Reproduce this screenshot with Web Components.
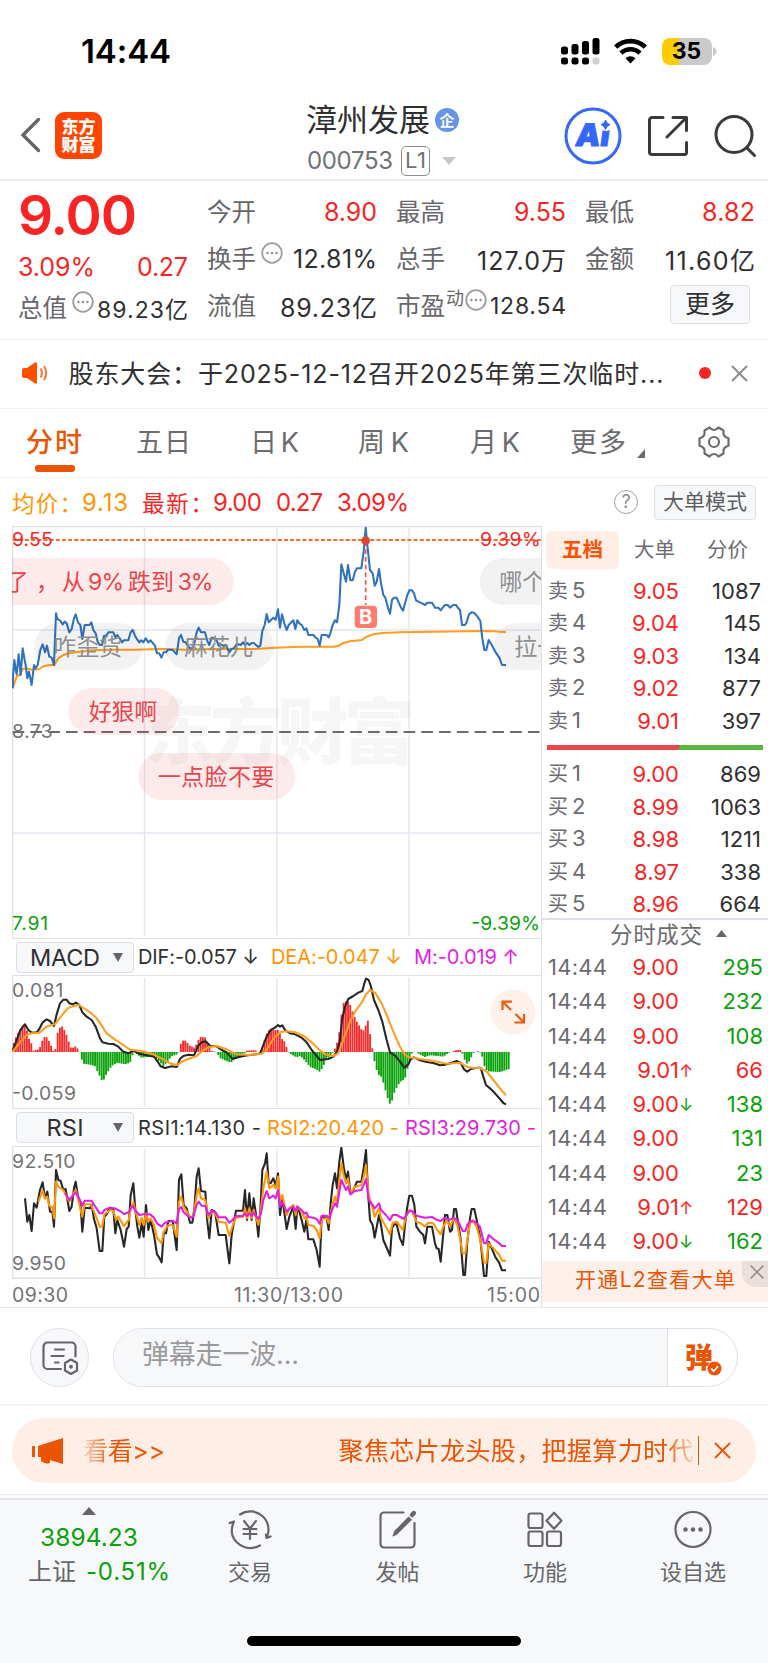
<!DOCTYPE html>
<html lang="zh-CN">
<head>
<meta charset="utf-8">
<title>漳州发展 000753</title>
<style>
  html, body { margin: 0; padding: 0; }
  body { width: 768px; height: 1663px; overflow: hidden; background: #fff; color: #2f2f31; font-family: Inter, "Noto Sans CJK SC", sans-serif; }
</style>
</head>
<body>
<stock-page></stock-page>
<script>
// Shared base: every element renders its own markup and styles in an open root
class Base extends HTMLElement {
  connectedCallback() {
    if (this.shadowRoot) return;
    const tmpl = document.createElement('template');
    tmpl.innerHTML = `<style>
      :host { display: block; box-sizing: border-box; }
      * { box-sizing: border-box; }
      svg { display: block; flex: none; }
    </style>` + this.render();
    this.attachShadow({ mode: 'open' }).append(tmpl.content.cloneNode(true));
  }
}

class StatusBar extends Base {
  render() {
    return /*html*/`
    <style>
      :host { display: flex; height: 94px; padding: 8px 51.5px 0 81px; align-items: center; justify-content: space-between; color: #000; }
      .time { font-size: 33px; font-weight: 600; }
      .right { display: flex; align-items: center; }
      .battery { display: flex; align-items: center; margin-left: 14.5px; }
      .cell { width: 50px; height: 27px; border-radius: 8px; font: 700 23px/27px Inter, sans-serif; text-align: center; background: linear-gradient(90deg, #ffcc01 17px, #cacaca 17px); }
    </style>
    <span class="time"><fit-text w="90">14:44</fit-text></span>
    <div class="right">
      <svg width="39" height="28" viewBox="0 0 39 28">
        <rect x="0" y="9.5" width="7" height="8" rx="2.5"/><rect x="10.5" y="7" width="7" height="10.5" rx="2.5"/>
        <rect x="21" y="4" width="7" height="13.5" rx="2.5"/><rect x="31.5" y="1" width="7" height="16.5" rx="2.5"/>
        <rect x="0" y="20.5" width="7" height="7" rx="2.5"/><rect x="10.5" y="20.5" width="7" height="7" rx="2.5"/>
        <rect x="21" y="20.5" width="7" height="7" rx="2.5"/><rect x="31.5" y="20.5" width="7" height="7" rx="2.5" fill="#cfcfcf"/>
      </svg>
      <svg width="33" height="26" viewBox="0 0 33 26" fill="none" stroke="#000" stroke-width="4.6" style="margin-left:14px">
        <path d="M1.7 9.2a21 21 0 0 1 29.6 0"/><path d="M7 15.2a13.5 13.5 0 0 1 19 0"/>
        <path d="M11.4 20.3a7.4 7.4 0 0 1 10.2 0L16.5 25.5z" fill="#000" stroke="none"/>
      </svg>
      <div class="battery"><div class="cell">35</div>
        <svg width="4" height="9" viewBox="0 0 4 9" style="margin-left:1px"><path d="M0 0q3.5 1.5 3.5 4.5T0 9z" fill="#cacaca"/></svg></div>
    </div>`;
  }
}

class StockHeader extends Base {
  render() {
    return /*html*/`
    <style>
      :host { display: grid; grid-template-columns: 306px 1fr 204px; height: 87px; border-bottom: 2px solid #ececee; }
      .left { display: flex; align-items: center; padding: 0 0 2px 20px; gap: 14px; height: 84px; }
      .logo { width: 47px; height: 47px; border-radius: 9px; background: #ff4400; color: #fff; font: 900 17px/18px "Noto Sans CJK SC", sans-serif; text-align: center; padding-top: 5px; }
      .mid { padding-top: 8px; }
      .name { display: flex; align-items: center; font-size: 31px; line-height: 36px; gap: 5px; }
      .badge { width: 24px; height: 24px; border-radius: 50%; background: #6594ea; color: #fff; font: 700 15px/23px "Noto Sans CJK SC", sans-serif; text-align: center; }
      .code { display: flex; align-items: center; font-size: 24px; line-height: 30px; color: #727276; margin: 8px 0 0 1px; }
      .lv { width: 29px; height: 30px; border: 1.5px solid #8d8d90; border-radius: 5px; font-size: 22px; line-height: 27px; padding-left: 3px; margin-left: 8px; }
      .right { display: flex; align-items: center; height: 84px; }
    </style>
    <div class="left">
      <svg width="21" height="36" viewBox="0 0 21 36" fill="none" stroke="#66666a" stroke-width="3.4" stroke-linecap="round"><path d="M18.5 2.5L3 18l15.5 15.5"/></svg>
      <div class="logo"><div>东方</div><div>财富</div></div>
    </div>
    <div class="mid">
      <div class="name"><fit-text w="124">漳州发展</fit-text><span class="badge">企</span></div>
      <div class="code"><fit-text w="86">000753</fit-text><span class="lv"><fit-text w="21">L1</fit-text></span>
        <svg width="14" height="8" viewBox="0 0 14 8" style="margin-left:12px"><path d="M0 0h14L7 8z" fill="#c9c9cb"/></svg></div>
    </div>
    <div class="right">
      <svg width="58" height="58" viewBox="0 0 58 58"><circle cx="29" cy="29" r="27" fill="none" stroke="#3667fb" stroke-width="3"/>
        <text x="10.5" y="39.5" font-family="Inter, sans-serif" font-size="31" font-weight="900" fill="#3667fb" stroke="#3667fb" stroke-width="1" stroke-linejoin="round" transform="translate(5.500) skewX(-8)" textLength="34">Ai</text>
        <circle cx="42" cy="17" r="7" fill="#fff"/>
        <path d="M41.500 13q1 3.800 4.500 4.700-3.500 1-4.500 4.800-1-3.800-4.500-4.800 3.500-.9 4.500-4.700z" fill="#3667fb" stroke="#3667fb" stroke-width="1"/></svg>
      <svg width="42" height="42" viewBox="0 0 42 42" fill="none" stroke="#3a3a3c" stroke-width="3" stroke-linecap="round" stroke-linejoin="round" style="margin-left:25px"><path d="M16 2.5H5A2.500 2.500 0 0 0 2.500 5v32A2.500 2.500 0 0 0 5 39.500h32.500a2 2 0 0 0 2-2V27.500M26 2.500h13.500v13M39.500 2.500L20 22"/></svg>
      <svg width="44" height="44" viewBox="0 0 44 44" fill="none" stroke="#3a3a3c" stroke-width="3" stroke-linecap="round" style="margin-left:25px"><circle cx="20" cy="20.5" r="18"/><path d="M33 34l7.500 7.500"/></svg>
    </div>`;
  }
}

class InfoDot extends Base {
  render() {
    return /*html*/`<svg width="22" height="22" viewBox="0 0 22 22"><circle cx="11" cy="11" r="9.8" fill="none" stroke="#9c9c9f" stroke-width="1.8"/>
      <g fill="#8b8b8e"><circle cx="6.5" cy="11" r="1.2"/><circle cx="11" cy="11" r="1.2"/><circle cx="15.5" cy="11" r="1.2"/></g></svg>`;
  }
}

class QuoteSummary extends Base {
  render() {
    return /*html*/`
    <style>
      :host { display: grid; grid-template-columns: repeat(4, 170px); column-gap: 19px; height: 159px; padding: 7px 0 0 18px; border-bottom: 1.5px solid #f0f0f2; font-size: 25px; }
      .row { display: flex; align-items: center; height: 47px; white-space: nowrap; }
      .row > :last-child { margin-left: auto; }
      .row > :first-child { color: #67676b; font-size: 24.5px; margin-top: -2px; }
      .price { height: 54px; font-size: 55px; line-height: 54px; font-weight: 600; color: #f82424; }
      .chg { display: flex; justify-content: space-between; height: 42px; line-height: 50px; color: #f82424; }
      .red { color: #f82424; }
      .small { font-size: 23px; padding-top: 1px; }
      info-dot { margin: -12px 0 0 5px; }
      .sup { font-size: 18px; color: #67676b; margin: -18px 0 0 1px; }
      .more { width: 80px; height: 39px; border: 1.5px solid #dfe0e5; border-radius: 4px; background: #f7f8fa; text-align: center; font-size: 25px; line-height: 36px; margin: -2px 5px 0 0; }
    </style>
    <div>
      <div class="price"><fit-text w="119">9.00</fit-text></div>
      <div class="chg"><fit-text w="77">3.09%</fit-text><fit-text w="51">0.27</fit-text></div>
      <div class="row"><span>总值</span><info-dot></info-dot><span class="small"><fit-text w="91">89.23亿</fit-text></span></div>
    </div>
    <div>
      <div class="row"><span>今开</span><span class="red"><fit-text w="53">8.90</fit-text></span></div>
      <div class="row"><span>换手</span><info-dot></info-dot><span><fit-text w="84">12.81%</fit-text></span></div>
      <div class="row"><span>流值</span><span><fit-text w="97">89.23亿</fit-text></span></div>
    </div>
    <div>
      <div class="row"><span>最高</span><span class="red"><fit-text w="52">9.55</fit-text></span></div>
      <div class="row"><span>总手</span><span><fit-text w="89">127.0万</fit-text></span></div>
      <div class="row"><span>市盈</span><span class="sup">动</span><info-dot style="margin-left:1px"></info-dot><span class="small"><fit-text w="76">128.54</fit-text></span></div>
    </div>
    <div>
      <div class="row"><span>最低</span><span class="red"><fit-text w="53">8.82</fit-text></span></div>
      <div class="row"><span>金额</span><span><fit-text w="90">11.60亿</fit-text></span></div>
      <div class="row"><i></i><span class="more">更多</span></div>
    </div>`;
  }
}

class NoticeBar extends Base {
  render() {
    return /*html*/`
    <style>
      :host { display: flex; align-items: center; height: 69px; padding: 0 20px 2px 22px; border-bottom: 1.5px solid #f0f0f2; font-size: 25px; }
      .txt { margin: -2px 0 0 20.5px; flex: 1; }
      .dot { width: 12px; height: 12px; border-radius: 50%; background: #f82424; }
    </style>
    <svg width="26" height="22" viewBox="0 0 26 22"><path d="M0 8a2 2 0 0 1 2-2h3l8-5.500q2-1 2 1v19q0 2-2 1L5 16H2a2 2 0 0 1-2-2z" fill="#ff5000"/><path d="M18.500 6.500q2.800 4.500 0 9M22 4q4.500 7 0 14" fill="none" stroke="#ff7434" stroke-width="2"/></svg>
    <span class="txt"><fit-text w="595">股东大会：于2025-12-12召开2025年第三次临时...</fit-text></span>
    <i class="dot"></i>
    <svg width="17" height="17" viewBox="0 0 17 17" stroke="#8d8d90" stroke-width="2" style="margin-left:20px"><path d="M1 1l15 15M16 1L1 16"/></svg>`;
  }
}

class PeriodTabs extends Base {
  render() {
    return /*html*/`
    <style>
      :host { display: flex; height: 69px; padding-left: 26px; border-bottom: 1.5px solid #f0f0f2; font-size: 27px; line-height: 67px; color: #6c6c70; }
      .on { color: #ea5404; font-weight: 500; display: flex; flex-direction: column; align-items: center; }
      .on i { width: 40px; height: 7px; border-radius: 3px; background: #ea5404; margin: -11px 0 0 2px; }
      svg { align-self: center; }
    </style>
    <span class="on"><fit-text w="56">分时</fit-text><i></i></span>
    <fit-text w="55" style="margin-left:54px">五日</fit-text>
    <fit-text w="49" style="margin-left:59px">日K</fit-text>
    <fit-text w="51" style="margin-left:59px">周K</fit-text>
    <fit-text w="50" style="margin-left:61px">月K</fit-text>
    <fit-text w="56" style="margin-left:50px">更多</fit-text>
    <svg width="8" height="9" viewBox="0 0 8 9" style="margin:20px 0 0 11px"><path d="M8 0v9H0z" fill="#6c6c70"/></svg>
    <svg width="32" height="32" viewBox="0 0 32 32" fill="none" stroke="#6c6c70" stroke-width="2.2" stroke-linejoin="round" style="margin:-2px 0 0 53px"><path d="M11.500 1.500q2 2.500 4.500 2.500t4.500-2.500l5 3q-.5 3.500.6 5.200t4.400 2.600v7.400q-3.300.9-4.400 2.600t-.6 5.200l-5 3q-2-2.500-4.500-2.500t-4.500 2.500l-5-3q.5-3.500-.6-5.200T1.500 19.700v-7.400q3.300-.9 4.400-2.600t.6-5.200z"/><circle cx="16" cy="16" r="5"/></svg>`;
  }
}

class ChartInfo extends Base {
  render() {
    return /*html*/`
    <style>
      :host { display: flex; align-items: center; height: 48px; padding: 0 12px 0 12px; font-size: 24px; color: #f82424; white-space: nowrap; }
      .avg { color: #ff9500; }
      .q { width: 24px; height: 24px; border: 1.6px solid #a0a0a3; border-radius: 50%; margin-left: auto; color: #8d8d90; font-size: 18px; line-height: 21px; text-align: center; }
      .mode { width: 102px; height: 35px; margin-left: 16px; border: 1.5px solid #dfe0e5; border-radius: 4px; background: #f7f8fa; color: #5c5c60; font-size: 21px; line-height: 32px; text-align: center; }
    </style>
    <fit-text class="avg" w="70" style="font-size:22.5px">均价：</fit-text><fit-text class="avg" w="46">9.13</fit-text>
    <fit-text w="71" style="font-size:22.5px;margin-left:14px">最新：</fit-text><fit-text w="49">9.00</fit-text>
    <fit-text w="47" style="margin-left:14px">0.27</fit-text><fit-text w="72" style="margin-left:14px">3.09%</fit-text>
    <span class="q">?</span><span class="mode">大单模式</span>`;
  }
}

// Chart drawings share one scale: three units to a pixel, plot starts at x = 36
const PRICE = '38,520 40,470 43,435 47,465 50,478 56,418 62,480 68,400 74,435 77,450 82,490 87,470 95,510 102,450 107,460 113,450 121,405 128,388 135,412 141,392 148,425 155,428 162,450 168,295 172,312 180,316 188,328 194,320 200,325 208,352 215,342 222,310 227,298 234,322 241,330 247,372 254,330 268,330 274,322 280,345 287,355 293,380 299,390 306,390 312,362 319,362 325,352 340,352 346,366 352,360 359,370 366,382 372,376 385,376 392,352 398,345 405,362 412,374 418,382 424,376 430,382 437,370 445,382 452,376 458,384 465,392 471,415 478,415 484,428 491,412 498,412 504,404 517,404 530,418 537,370 543,360 550,380 557,382 564,394 570,400 577,400 583,385 590,352 596,338 603,352 615,352 622,378 628,390 635,368 642,370 650,376 656,392 662,388 670,392 677,390 682,400 688,412 695,402 702,400 708,390 715,388 722,390 729,382 735,390 742,384 748,390 755,384 761,384 768,390 775,396 781,392 787,348 794,330 800,297 806,322 812,316 820,308 827,314 834,283 840,338 846,298 853,325 860,345 866,330 880,316 886,342 892,316 898,325 905,330 913,345 919,340 925,360 940,360 947,368 953,372 959,392 965,360 980,360 986,367 992,352 998,330 1005,316 1011,322 1018,270 1024,148 1031,175 1038,200 1044,150 1051,196 1058,196 1065,170 1071,160 1084,160 1091,110 1097,38 1102,90 1110,165 1118,175 1124,212 1130,200 1137,162 1143,205 1150,240 1156,248 1163,275 1170,296 1176,255 1182,248 1190,248 1196,262 1203,278 1209,287 1216,262 1222,240 1228,226 1236,226 1242,235 1248,256 1260,262 1268,266 1275,270 1282,263 1296,263 1305,278 1315,278 1322,286 1328,278 1335,270 1343,270 1350,278 1360,270 1368,270 1375,280 1380,285 1386,330 1395,330 1400,322 1407,298 1415,292 1423,294 1432,304 1441,318 1447,370 1453,405 1459,405 1466,375 1474,388 1487,412 1498,428 1506,450 1518,450';
const AVG = '38,520 50,485 60,478 68,462 80,460 95,464 118,462 130,454 145,451 163,449 175,430 190,420 210,414 240,410 280,406 330,404 400,404 480,402 560,404 640,402 700,402 760,402 825,398 900,395 1000,395 1015,393 1030,384 1050,379 1086,375 1100,365 1120,358 1150,354 1200,352 1300,350 1400,349 1470,348 1500,350 1518,352';
const DIF = '38,378 50,345 60,318 68,305 75,298 85,315 95,323 110,322 118,312 128,292 140,283 150,288 162,303 170,268 180,235 190,224 200,224 208,235 218,238 228,233 238,240 247,262 260,275 275,285 287,305 300,340 308,352 325,356 340,357 355,365 370,380 385,385 400,377 415,385 435,390 450,393 462,395 472,408 482,424 495,429 515,424 530,426 540,402 550,393 565,389 582,391 595,362 605,352 617,349 630,362 650,364 665,375 680,382 697,401 715,397 730,393 750,390 780,386 790,360 800,335 812,315 825,308 834,300 840,305 847,301 855,315 870,325 885,328 905,338 920,352 935,375 950,393 960,405 985,402 1000,395 1012,378 1020,345 1026,285 1035,245 1045,222 1060,213 1075,203 1087,198 1093,175 1098,161 1106,165 1113,185 1122,225 1135,255 1147,290 1160,345 1170,382 1185,392 1200,410 1213,428 1225,418 1232,403 1242,397 1260,406 1280,411 1300,414 1320,421 1335,419 1355,413 1370,408 1382,413 1392,433 1402,440 1413,432 1430,428 1442,428 1450,455 1458,480 1470,490 1485,505 1500,522 1510,534 1518,538';
const DEA = '38,380 60,352 80,330 95,325 118,323 140,305 165,297 185,272 203,250 220,243 237,240 255,252 270,262 290,280 305,302 320,325 345,344 370,360 390,374 420,377 460,388 485,400 510,415 530,420 550,408 570,400 590,393 610,375 628,366 650,363 680,373 710,388 750,390 785,386 800,375 810,358 825,335 845,320 860,319 885,322 910,332 935,352 955,372 975,388 1000,393 1015,385 1030,345 1050,290 1065,260 1085,233 1098,208 1110,195 1125,203 1145,235 1160,270 1180,320 1200,365 1215,390 1228,397 1260,402 1300,408 1340,416 1380,413 1400,425 1415,428 1440,429 1460,440 1480,465 1500,490 1518,511';
const HIST = '38,20 50,50 60,68 68,78 75,80 82,60 90,28 96,25 97,0 102,5 118,8 125,30 132,45 142,44 150,25 158,10 162,-4 166,0 168,45 178,70 184,80 192,68 200,50 208,25 214,10 228,18 236,5 242,-5 248,-35 270,-38 285,-42 298,-70 308,-90 320,-65 335,-42 350,-32 375,-37 390,-32 398,-8 405,5 412,-8 425,-17 440,-15 465,-12 480,-30 490,-42 502,-30 515,-12 535,-6 540,20 548,34 558,34 568,20 585,12 592,30 600,45 615,44 625,22 635,3 650,0 660,-18 675,-25 692,-32 705,-22 720,-14 732,-6 740,4 765,6 780,-5 788,10 795,45 805,65 820,66 835,66 845,40 855,30 863,3 868,-4 875,-8 890,-16 900,-12 915,-25 930,-45 945,-50 960,-60 970,-42 980,-20 995,-8 1002,5 1010,22 1018,60 1024,110 1032,153 1048,150 1056,125 1068,95 1080,75 1088,62 1095,70 1101,98 1106,90 1112,38 1117,10 1120,0 1125,-40 1135,-68 1145,-75 1155,-110 1165,-145 1172,-160 1185,-115 1200,-90 1215,-80 1225,-40 1235,-5 1245,3 1255,-5 1275,-15 1290,-10 1315,-12 1330,-14 1345,-3 1355,0 1365,5 1380,7 1386,0 1392,-20 1402,-37 1412,-20 1420,-3 1435,3 1445,-5 1452,-40 1462,-58 1500,-60 1515,-55 1530,-50';
const RSI1 = '75,820 82,890 88,870 95,918 102,835 110,848 120,795 128,772 135,820 142,800 150,860 157,860 162,905 168,735 175,765 182,768 190,795 197,792 208,858 215,845 222,790 227,770 234,815 241,830 247,920 254,848 270,850 275,840 282,882 290,910 299,978 307,978 313,875 320,868 330,848 340,852 346,925 352,885 362,915 372,965 380,912 386,905 392,810 400,775 406,855 412,905 418,938 425,895 431,935 438,840 445,915 452,885 462,930 471,988 478,998 485,1012 491,925 498,925 505,888 518,888 530,975 537,765 544,748 551,840 560,850 570,893 577,893 583,850 590,755 596,730 603,798 616,800 622,890 628,940 635,855 645,860 656,930 677,930 688,1015 695,930 708,857 729,857 735,795 741,885 748,805 755,885 761,820 768,870 775,935 781,855 787,735 795,715 800,685 806,775 812,775 820,760 827,780 834,745 840,870 847,820 860,912 868,875 880,845 887,912 892,845 898,860 905,885 913,920 919,885 925,943 940,943 950,975 959,1025 965,875 980,878 986,915 992,835 998,780 1005,745 1011,790 1018,710 1024,668 1031,725 1038,765 1044,740 1051,800 1058,800 1071,770 1084,770 1091,730 1098,675 1104,800 1110,885 1118,900 1124,938 1137,870 1143,900 1150,945 1163,975 1170,992 1176,910 1183,898 1190,898 1200,940 1209,960 1216,890 1222,845 1228,812 1236,812 1243,840 1249,905 1260,920 1270,930 1275,955 1282,905 1296,905 1305,955 1310,970 1316,972 1322,1010 1330,925 1335,870 1342,870 1350,920 1356,915 1362,852 1368,852 1375,900 1381,935 1390,1050 1395,1050 1402,950 1410,880 1415,852 1423,852 1430,885 1441,940 1452,1053 1459,1053 1466,950 1475,970 1487,998 1497,1012 1506,1036 1518,1036';
const RSI2 = '115,830 128,797 135,820 142,815 148,843 157,846 162,880 168,770 175,785 190,795 208,830 220,805 228,795 236,830 247,875 254,838 272,838 282,860 290,880 299,905 307,905 313,868 330,855 340,858 348,885 355,875 372,903 386,885 392,850 400,832 408,865 418,900 425,878 431,900 438,865 445,890 452,880 462,900 471,938 485,955 491,920 505,900 518,900 530,935 537,830 544,815 551,845 570,875 580,875 590,810 596,790 603,820 616,825 625,880 635,860 645,863 656,890 677,893 688,932 697,905 708,878 729,875 735,850 741,880 748,850 755,880 761,855 775,900 781,865 790,790 800,740 808,790 820,780 827,790 834,755 840,830 847,810 860,870 868,850 880,840 887,870 892,845 905,860 913,880 919,875 925,900 940,902 950,915 959,940 965,882 980,880 986,895 998,835 1005,815 1011,835 1018,765 1024,715 1031,750 1038,775 1044,760 1051,805 1065,785 1084,780 1091,755 1098,720 1106,810 1118,850 1124,875 1137,850 1143,880 1155,900 1170,928 1178,893 1190,890 1209,915 1216,880 1228,855 1236,858 1249,890 1262,895 1275,905 1285,893 1300,895 1310,912 1322,928 1330,905 1340,885 1350,905 1362,880 1372,900 1380,940 1388,985 1396,985 1402,945 1410,895 1418,885 1430,905 1441,945 1452,1012 1459,1014 1466,955 1480,970 1498,990 1506,1007 1518,1007';
const RSI3 = '195,803 208,825 222,808 228,802 238,822 247,842 254,827 274,827 285,843 299,865 307,865 313,855 325,850 345,850 360,858 372,867 386,862 398,842 405,855 418,870 431,868 450,868 462,878 471,895 485,905 495,893 505,890 518,888 530,895 537,852 544,846 551,862 570,878 580,875 590,840 596,830 605,842 616,843 625,870 635,858 645,860 656,877 677,877 688,893 697,885 708,873 729,873 735,865 741,873 748,865 755,873 761,863 775,882 783,865 790,825 800,798 808,820 820,812 827,820 834,795 840,845 847,832 860,860 870,850 880,845 887,858 892,845 905,855 913,866 919,862 925,876 940,878 950,882 959,896 965,872 980,872 988,880 998,850 1005,835 1011,845 1018,800 1024,765 1031,780 1038,795 1044,785 1051,808 1065,798 1084,795 1091,780 1098,762 1106,825 1118,840 1124,850 1137,835 1143,855 1158,870 1170,886 1178,870 1190,870 1212,882 1222,865 1228,858 1236,858 1249,872 1275,878 1296,876 1310,884 1322,888 1332,880 1350,884 1362,878 1375,890 1388,918 1396,918 1402,900 1412,888 1425,890 1440,905 1452,955 1459,955 1466,930 1480,942 1498,955 1506,963 1518,963';

const line = (pts, color, w = 6.2) => `<polyline points="${pts}" fill="none" stroke="${color}" stroke-width="${w}" stroke-linejoin="round"/>`;
const grid = (y1, y2) => [433.5, 831, 1227].map(x => `<path d="M${x} ${y1}V${y2}" stroke="#e2e6ef" stroke-width="4"/>`).join('');

// Bars between the zero line and the interpolated envelope
function bars() {
  const env = HIST.split(' ').map(p => p.split(',').map(Number));
  let out = '';
  for (let x = 41; x < 1526; x += 6.6) {
    const i = Math.max(1, env.findIndex(p => p[0] >= x));
    const [x0, h0] = env[i - 1], [x1, h1] = env[i];
    const h = h0 + (h1 - h0) * (x - x0) / (x1 - x0);
    out += `<rect x="${(x - 2.8).toFixed(1)}" y="${(h > 0 ? 381 - h : 381).toFixed(1)}" width="5.6" height="${Math.abs(h).toFixed(1)}" fill="${h > 0 ? '#f52b2b' : '#09a209'}"/>`;
  }
  return out;
}

class PriceChart extends Base {
  pill(x, y, w, text, hot, tx, tw) {
    return `<rect x="${x}" y="${y}" width="${w}" height="141" rx="70.5" fill="${hot ? '#ea3943' : '#000'}" fill-opacity="${hot ? .1 : .05}"/>
      <text x="${tx}" y="${y + 97}" font-size="69" fill="${hot ? '#e94449' : '#8e8e90'}" ${tw ? `textLength="${tw}"` : ''}>${text}</text>`;
  }
  render() {
    return /*html*/`
    <style>
      :host { height: 412px; }
      text { font-family: Inter, "Noto Sans CJK SC", sans-serif; }
    </style>
    <svg width="530" height="412" viewBox="36 33 1590 1236">
      <path d="M38 1269V35H1626" fill="none" stroke="#dfe1e7" stroke-width="4"/>
      ${grid(40, 1262)}
      <path d="M38 345H1624M38 954H1624" stroke="#e2e6ef" stroke-width="4"/>
      <text x="430" y="728" font-size="216" font-weight="900" fill="#000" fill-opacity=".035" textLength="816">东方财富</text>
      <path d="M38 651H1624" stroke="#6b6b6b" stroke-width="6" stroke-dasharray="35 18.3"/>
      ${line(AVG, '#ff9d1e')}${line(PRICE, '#2f73c0')}
      <path d="M38 75H1624" stroke="#f76b2c" stroke-width="6" stroke-dasharray="12 6.5"/>
      <path d="M1097 80V270" stroke="#f5544c" stroke-width="5" stroke-dasharray="14 9"/>
      <circle cx="1097" cy="77" r="13" fill="#e2452f"/>
      <rect x="1064" y="272" width="67" height="67" rx="12" fill="#ff7b6e"/>
      <text x="1097" y="327" font-size="60" font-weight="700" fill="#fff" text-anchor="middle">B</text>
      ${this.pill(-60, 129, 761, '<tspan x="17">了</tspan><tspan x="108">，</tspan><tspan x="185">从</tspan><tspan x="264" textLength="108">9%</tspan><tspan x="384">跌到</tspan><tspan x="533" textLength="107">3%</tspan>', true, 17)}
      ${this.pill(103, 324, 325, '咋歪货', false, 160, 206)}
      ${this.pill(495, 324, 327, '麻花儿', false, 553, 206)}
      ${this.pill(205, 519, 332, '好狠啊', true, 266, 206)}
      ${this.pill(415, 714, 470, '一点脸不要', true, 473, 350)}
      ${this.pill(1439, 129, 320, '哪个', false, 1498, 138)}
      ${this.pill(1482, 324, 320, '拉一', false, 1543, 138)}
      <g font-size="58">
        <text x="36" y="93" fill="#f82424" textLength="122">9.55</text>
        <text x="1440" y="93" fill="#f82424" textLength="182">9.39%</text>
        <text x="36" y="670" fill="#737376" textLength="122">8.73</text>
        <text x="36" y="1245" fill="#09a209" textLength="108">7.91</text>
        <text x="1414" y="1245" fill="#09a209" textLength="206">-9.39%</text>
      </g>
    </svg>`;
  }
}

class IndicatorBar extends Base {
  render() {
    return /*html*/`
    <style>
      :host { display: flex; align-items: center; height: 38px; border: solid #dfe1e7; border-width: 1.5px 0; padding-left: 4px; font-size: 20px; white-space: nowrap; }
      .pick { width: 118px; height: 31px; border: 1.5px solid #dcdee4; border-radius: 4px; background: #f7f8fa; display: flex; align-items: center; font-size: 23.5px; margin-right: 4px; }
      .pick b { flex: 1; font-weight: 400; display: flex; justify-content: center; }
      .pick svg { margin-right: 10px; }
    </style>
    <div class="pick"><b><slot name="name"></slot></b><svg width="10" height="9" viewBox="0 0 10 9"><path d="M0 0h10L5 9z" fill="#66666a"/></svg></div>
    <slot></slot>`;
  }
}

class MacdChart extends Base {
  render() {
    return /*html*/`
    <style>
      :host { height: 132px; position: relative; }
      text { font-family: Inter, sans-serif; }
      .zoom { position: absolute; right: 6px; top: 13px; }
    </style>
    <svg width="530" height="132" viewBox="36 153 1590 396">
      <path d="M38 153V549" stroke="#dfe1e7" stroke-width="4"/>${grid(159, 543)}
      ${bars()}${line(DIF, '#262626')}${line(DEA, '#ff9d1e')}
      <text x="36" y="216" font-size="58" fill="#737376" textLength="154">0.081</text>
      <text x="36" y="525" font-size="58" fill="#737376" textLength="192">-0.059</text>
    </svg>
    <svg class="zoom" width="46" height="46" viewBox="0 0 46 46"><circle cx="23" cy="23" r="22.5" fill="#fdf1ea"/>
      <path d="M12.500 21V12.700H22M13 13l8 8M34 25v8.500h-9.500M33.500 33l-8-8" fill="none" stroke="#ea5a10" stroke-width="2.2"/></svg>`;
  }
}

class RsiChart extends Base {
  render() {
    return /*html*/`
    <style>
      :host { height: 132px; }
      text { font-family: Inter, sans-serif; }
    </style>
    <svg width="530" height="132" viewBox="36 666 1590 396">
      <path d="M38 666V1062" stroke="#dfe1e7" stroke-width="4"/>${grid(672, 1056)}
      <path d="M36 1060H1626" stroke="#dfe1e7" stroke-width="5"/>
      ${line(RSI1, '#262626')}${line(RSI2, '#ff9500')}${line(RSI3, '#e31ee3')}
      <text x="36" y="729" font-size="58" fill="#737376" textLength="190">92.510</text>
      <text x="36" y="1036" font-size="58" fill="#737376" textLength="162">9.950</text>
    </svg>`;
  }
}

class OrderBook extends Base {
  render() {
    const sell = [['卖5', '9.05', 1087], ['卖4', '9.04', 145], ['卖3', '9.03', 134], ['卖2', '9.02', 877], ['卖1', '9.01', 397]];
    const buy = [['买1', '9.00', 869], ['买2', '8.99', 1063], ['买3', '8.98', 1211], ['买4', '8.97', 338], ['买5', '8.96', 664]];
    const deals = [['9.00', '', 295], ['9.00', '', 232], ['9.00', '', 108], ['9.01', '↑', 66], ['9.00', '↓', 138], ['9.00', '', 131], ['9.00', '', 23], ['9.01', '↑', 129], ['9.00', '↓', 162]];
    const row = r => `<div class="row"><span class="lab">${r[0][0]}<i>${r[0][1]}</i></span><span class="p">${r[1]}</span><span class="v">${r[2]}</span></div>`;
    const deal = r => {
      const c = r[1] === '↑' ? 'r' : 'g';
      return `<div class="row deal"><span class="t"><fit-text w="59">14:44</fit-text></span><span class="p">${r[0]}</span><span class="a ${c}">${r[1]}</span><span class="v ${c}">${r[2]}</span></div>`;
    };
    return /*html*/`
    <style>
      :host { width: 227px; margin-left: -1px; border-left: 1.5px solid #dfe1e7; font-size: 22px; flex: none; background: #fff; }
      .tabs { display: flex; height: 48px; padding: 5px 0 0 4px; color: #6c6c70; font-size: 20.5px; line-height: 38px; }
      .tabs b { width: 73px; height: 38px; border-radius: 6px; background: #ffeee5; color: #ff5000; text-align: center; }
      .tabs span { margin-left: 15px; }
      .tabs span + span { margin-left: 32px; }
      .row { display: flex; height: 32.4px; line-height: 34px; padding: 0 7px 0 6px; }
      .lab { width: 60px; color: #6c6c70; font-size: 20px; line-height: 33px; }
      .lab i { font-style: normal; font-size: 22px; margin-left: 4px; }
      .p { width: 71px; color: #f82424; text-align: right; }
      .v { flex: 1; text-align: right; }
      .bar { height: 5px; margin: 9.5px 5px 7px; background: linear-gradient(120deg, #e9474b 61%, #56b840 61%); }
      .head { display: flex; align-items: center; height: 32px; margin-top: -1.5px; border-top: 2px solid #dfe1e7; padding: 0 0 3px 68px; color: #6c6c70; font-size: 22.5px; }
      .deal { height: 34.3px; line-height: 35px; padding-right: 5px; }
      .t { width: 60px; color: #6c6c70; }
      .a { width: 16px; font-size: 17px; line-height: 36px; }
      .r { color: #f82424; } .g { color: #09a209; }
      .vip { position: relative; height: 41px; margin-top: 2px; background: #fdf0ea; color: #ea5404; font-size: 21px; line-height: 37px; padding-left: 33px; overflow: hidden; }
      .x { position: absolute; right: 0; top: 0; width: 26px; height: 26px; border-radius: 0 0 0 14px; background: #eadfda; padding: 4px 0 0 8px; }
    </style>
    <div class="tabs"><b>五档</b><span>大单</span><span>分价</span></div>
    ${sell.map(row).join('')}
    <div class="bar"></div>
    ${buy.map(row).join('')}
    <div class="head"><fit-text w="92">分时成交</fit-text><svg width="11" height="7" viewBox="0 0 11 7" style="margin-left:14px"><path d="M0 7L5.500 0 11 7z" fill="#66666a"/></svg></div>
    ${deals.map(deal).join('')}
    <div class="vip"><fit-text w="160">开通L2查看大单</fit-text><span class="x"><svg width="14" height="14" viewBox="0 0 14 14" stroke="#8d8d90" stroke-width="1.5"><path d="M.5.5l13 13M13.500.5l-13 13"/></svg></span></div>`;
  }
}

class MarketPanel extends Base {
  render() {
    return /*html*/`
    <style>
      :host { display: flex; height: 782px; border-bottom: 1.5px solid #e6e7eb; overflow: hidden; padding-left: 12px; }
      .charts { width: 530px; flex: none; }
      .o { color: #ff9500; } .m { color: #e31ee3; }
      .axis { display: flex; font-size: 19.5px; line-height: 33px; color: #737376; }
    </style>
    <div class="charts">
      <price-chart></price-chart>
      <indicator-bar><fit-text slot="name" w="70">MACD</fit-text>
        <fit-text w="121">DIF:-0.057 ↓</fit-text><fit-text class="o" w="131" style="margin-left:12px">DEA:-0.047 ↓</fit-text><fit-text class="m" w="105" style="margin-left:12px">M:-0.019 ↑</fit-text></indicator-bar>
      <macd-chart></macd-chart>
      <indicator-bar style="height:39px"><fit-text slot="name" w="37">RSI</fit-text>
        <fit-text w="123">RSI1:14.130 -</fit-text><fit-text class="o" w="132" style="margin-left:6px">RSI2:20.420 -</fit-text><fit-text class="m" w="131" style="margin-left:6px">RSI3:29.730 -</fit-text></indicator-bar>
      <rsi-chart></rsi-chart>
      <div class="axis"><fit-text w="56">09:30</fit-text><fit-text w="109" style="margin-left:166px">11:30/13:00</fit-text><fit-text w="53" style="margin-left:144px">15:00</fit-text></div>
    </div>
    <order-book></order-book>`;
  }
}

class DanmakuInput extends Base {
  render() {
    return /*html*/`
    <style>
      :host { display: flex; height: 98px; padding: 20px 30px 0; gap: 24px; border-bottom: 2px solid #f5f5f7; }
      .set { width: 59px; height: 59px; border: 1.5px solid #dfe0e5; border-radius: 50%; background: #f7f8fa; padding: 12px 0 0 11px; }
      .box { display: flex; width: 625px; height: 59px; border: 1.5px solid #dfe0e5; border-radius: 30px; overflow: hidden; }
      .in { flex: 1; background: #f7f8fa; border-right: 1.5px solid #dfe0e5; padding-left: 28px; font-size: 27px; line-height: 52px; color: #9a9a9d; }
      .send { width: 69px; display: grid; place-items: center start; padding: 0 0 4px 17px; color: #ea5404; position: relative; font: 900 28px/30px "Noto Sans CJK SC", sans-serif; }
      .send svg { position: absolute; left: 39px; top: 32px; }
    </style>
    <div class="set"><svg width="37" height="35" viewBox="0 0 37 35" fill="none" stroke="#66666a" stroke-width="2.2" stroke-linecap="round" stroke-linejoin="round"><path d="M19 28H5.500a4 4 0 0 1-4-4V5.500a4 4 0 0 1 4-4h24a4 4 0 0 1 4 4v10M13 8.500h9M9.500 15h12M13 21.500h3.500"/><path d="M29 18.500l6 3.500v7.500L29 33l-6-3.500V22z"/><circle cx="29" cy="25.7" r="1.2" fill="#66666a" stroke-width="1.5"/></svg></div>
    <div class="box"><div class="in"><fit-text w="157">弹幕走一波...</fit-text></div>
      <div class="send">弹<svg width="15" height="15" viewBox="0 0 15 15"><circle cx="7.5" cy="7.5" r="7.3" fill="#ea5404" stroke="#fff" stroke-width=".6"/><path d="M4 7.500l2.700 2.700L11 5.300" fill="none" stroke="#fff" stroke-width="1.7"/></svg></div></div>`;
  }
}

class PromoBar extends Base {
  render() {
    return /*html*/`
    <style>
      :host { height: 89px; padding: 12px 12px 0; border-bottom: 1.5px solid #e6e7eb; }
      .bar { display: flex; align-items: center; height: 65px; border-radius: 33px; background: #feeee6; padding: 0 25px 0 20px; color: #ea5404; font-size: 25px; }
      .scroll { display: flex; justify-content: space-between; width: 612px; margin: -4px 0 0 20px; white-space: nowrap; -webkit-mask: linear-gradient(90deg, rgba(0,0,0,.15), #000 30px, #000 582px, rgba(0,0,0,.15)); mask: linear-gradient(90deg, rgba(0,0,0,.15), #000 30px, #000 582px, rgba(0,0,0,.15)); }
      .sep { width: 1.5px; height: 29px; background: #ea5404; margin: 0 15px 0 4px; }
    </style>
    <div class="bar">
      <svg width="31" height="28" viewBox="0 0 31 28" fill="#ea5404"><rect x="0" y="9" width="3" height="11"/><path d="M6 9L31 1v26l-13-4v2.500q-1 1.500-3 1t-5-1.500q-1-.5-1-2V20H6z"/></svg>
      <div class="scroll"><fit-text w="82">看看&gt;&gt;</fit-text><fit-text w="355">聚焦芯片龙头股，把握算力时代</fit-text></div>
      <i class="sep"></i>
      <svg width="17" height="17" viewBox="0 0 17 17" stroke="#ea5404" stroke-width="1.8"><path d="M1 1l15 15M16 1L1 16"/></svg>
    </div>`;
  }
}

class BottomNav extends Base {
  render() {
    return /*html*/`
    <style>
      :host { height: 168px; background: #f7f8fa; }
      .rule { height: 5px; background: #fcfcfd; border-bottom: 2px solid #e4e5e8; }
      .items { display: grid; grid-template-columns: 196px 108px 187px 108px 188px; height: 136px; color: #66666a; font-size: 22px; }
      .it { display: flex; flex-direction: column; align-items: center; padding-top: 10px; }
      .it span { margin-top: 6px; line-height: 32px; }
      .idx { padding: 7px 0 0 28px; white-space: nowrap; }
      .idx svg { margin-left: 54px; }
      .n { color: #09a209; font-size: 24.5px; line-height: 30px; padding-left: 12px; margin-top: 7px; }
      .c { display: flex; gap: 10px; align-items: center; line-height: 36px; font-size: 24px; margin-top: 2px; }
      .c fit-text { color: #09a209; }
      .home { width: 274px; height: 10px; border-radius: 5px; background: #000; margin: 0 auto; }
    </style>
    <div class="rule"></div>
    <div class="items">
      <div class="idx"><svg width="14" height="8" viewBox="0 0 14 8"><path d="M0 8l7-8 7 8z" fill="#66666a"/></svg>
        <div class="n"><fit-text w="98">3894.23</fit-text></div>
        <div class="c"><span>上证</span><fit-text w="84">-0.51%</fit-text></div></div>
      <div class="it"><svg width="44" height="40" viewBox="0 0 44 40" fill="none" stroke="#66666a" stroke-width="2.2" stroke-linecap="round" stroke-linejoin="round"><path d="M12 4.500A18.300 18.300 0 0 1 38.500 28l4-1.500M38.500 28l-.5-3.500M1.500 13L6 11.500q-5.500 12 2.500 20.500Q19 42 32 35.500M16 11l6 7.500 6-7.500M22 18.500V29M15.500 19h13M15.500 24h13"/></svg><span>交易</span></div>
      <div class="it"><svg width="38" height="40" viewBox="0 0 38 40" fill="none" stroke="#66666a" stroke-width="2.2" stroke-linecap="round"><path d="M24.500 2.500H5A3.500 3.500 0 0 0 1.500 6v28A3.500 3.500 0 0 0 5 37.500h27a3.500 3.500 0 0 0 3.500-3.500V13"/><path d="M13.300 26.500l2-5.500L29.500 6.500l3.500 3.200L17.500 25z" fill="#66666a" stroke="none"/><path d="M33 5l1.800-1.800" stroke-width="4.5"/></svg><span>发帖</span></div>
      <div class="it"><svg width="36" height="40" viewBox="0 0 36 40" fill="none" stroke="#66666a" stroke-width="2.2" stroke-linejoin="round"><rect x="1.5" y="3.5" width="14" height="14.5" rx="2"/><rect x="1.5" y="21.5" width="14" height="14.5" rx="2"/><rect x="20" y="21.5" width="14" height="14.5" rx="2"/><path d="M27 2.700l7.500 8-7.500 8-7.500-8z"/></svg><span>功能</span></div>
      <div class="it"><svg width="38" height="40" viewBox="0 0 38 40"><circle cx="19" cy="19.5" r="17.5" fill="none" stroke="#66666a" stroke-width="2.2"/><g fill="#66666a"><circle cx="11.5" cy="19.5" r="2.2"/><circle cx="19" cy="19.5" r="2.2"/><circle cx="26.5" cy="19.5" r="2.2"/></g></svg><span>设自选</span></div>
    </div>
    <div class="home"></div>`;
  }
}

class StockPage extends Base {
  render() {
    return /*html*/`
    <status-bar></status-bar>
    <stock-header></stock-header>
    <quote-summary></quote-summary>
    <notice-bar></notice-bar>
    <period-tabs></period-tabs>
    <chart-info></chart-info>
    <market-panel></market-panel>
    <danmaku-input></danmaku-input>
    <promo-bar></promo-bar>
    <bottom-nav></bottom-nav>`;
  }
}

// Tracks its text in or out so that it fills exactly w pixels
class FitText extends HTMLElement {
  connectedCallback() {
    if (this.shadowRoot) return;
    this.attachShadow({ mode: 'open' }).innerHTML = `
      <style>:host { display: block; flex: none; white-space: nowrap; } span { display: inline-block; }</style><span><slot></slot></span>`;
    const span = this.shadowRoot.querySelector('span');
    const w = +this.getAttribute('w');
    const gap = (w - span.getBoundingClientRect().width) / (this.textContent.length - 1);
    span.style.letterSpacing = gap + 'px';
    this.style.width = w + 'px';
  }
}

customElements.define('stock-page', StockPage);
customElements.define('status-bar', StatusBar);
customElements.define('stock-header', StockHeader);
customElements.define('info-dot', InfoDot);
customElements.define('quote-summary', QuoteSummary);
customElements.define('notice-bar', NoticeBar);
customElements.define('period-tabs', PeriodTabs);
customElements.define('chart-info', ChartInfo);
customElements.define('market-panel', MarketPanel);
customElements.define('price-chart', PriceChart);
customElements.define('indicator-bar', IndicatorBar);
customElements.define('macd-chart', MacdChart);
customElements.define('rsi-chart', RsiChart);
customElements.define('order-book', OrderBook);
customElements.define('danmaku-input', DanmakuInput);
customElements.define('promo-bar', PromoBar);
customElements.define('bottom-nav', BottomNav);
// last, so that surrounding styles are in place when it measures
customElements.define('fit-text', FitText);
</script>
</body>
</html>
